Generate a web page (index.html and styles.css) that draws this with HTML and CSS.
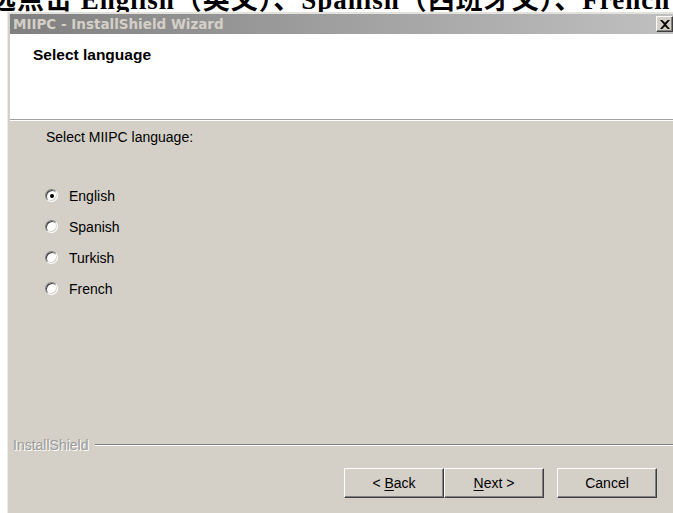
FILE: index.html
```html
<!DOCTYPE html>
<html lang="zh">
<head>
<meta charset="utf-8">
<title>MIIPC - InstallShield Wizard</title>
<link rel="stylesheet" href="styles.css">
</head>
<body>
<div class="caption"><span class="caption-text">选点击 English（英文）、Spanish（西班牙文）、French</span></div>
<div class="window">
  <div class="titlebar">
    <span class="title">MIIPC - InstallShield Wizard</span>
    <span class="close"><svg width="9" height="8" viewBox="0 0 9 8"><path d="M0 0h2l2.5 2.5L7 0h2L5.5 4 9 8H7L4.5 5.5 2 8H0l3.5-4z" fill="#000"/></svg></span>
  </div>
  <div class="header">
    <div class="header-title">Select language</div>
  </div>
  <div class="body">
    <div class="prompt">Select MIIPC language:</div>
    <div class="options">
      <label class="option"><span class="radio checked"></span>English</label>
      <label class="option"><span class="radio"></span>Spanish</label>
      <label class="option"><span class="radio"></span>Turkish</label>
      <label class="option"><span class="radio"></span>French</label>
    </div>
    <div class="brand-row">
      <span class="brand">InstallShield</span>
      <span class="etch"></span>
    </div>
    <div class="buttons">
      <div class="pair">
        <button class="btn" type="button">&lt; <u>B</u>ack</button>
        <button class="btn" type="button"><u>N</u>ext &gt;</button>
      </div>
      <button class="btn" type="button">Cancel</button>
    </div>
  </div>
</div>
</body>
</html>
```
FILE: styles.css
```css
html, body {
  margin: 0;
  padding: 0;
}
body {
  width: 673px;
  height: 513px;
  overflow: hidden;
  background: #fff;
  display: flex;
  flex-direction: column;
}

/* clipped line of document text above the dialog */
.caption {
  height: 12px;
  overflow: hidden;
  flex: none;
}
.caption-text {
  display: block;
  margin-top: -15px;
  margin-left: -11px;
  font-family: "Liberation Serif", "Noto Sans CJK SC", serif;
  font-weight: bold;
  font-size: 27px;
  line-height: 30px;
  letter-spacing: 1px;
  white-space: nowrap;
  color: #000;
}

.window {
  flex: 1;
  margin-left: 7px;
  width: 680px;
  display: flex;
  flex-direction: column;
  background: #d4d0c8;
  border-top: 2px solid #e4e2dc;
  border-left: 1px solid #ecebe7;
  padding-left: 2px;
  box-sizing: border-box;
}

.titlebar {
  height: 20px;
  flex: none;
  display: flex;
  align-items: center;
  justify-content: space-between;
  width: 664px;
  background: linear-gradient(to right, #808080, #c0c0c0);
  padding: 0 1px 0 3px;
  box-sizing: border-box;
}
.title {
  font-family: "DejaVu Sans", sans-serif;
  font-weight: bold;
  font-size: 13.5px;
  color: #d4d0c8;
}
.close {
  width: 17px;
  height: 16px;
  box-sizing: border-box;
  background: #d4d0c8;
  border-top: 1px solid #fff;
  border-left: 1px solid #fff;
  border-right: 1px solid #404040;
  border-bottom: 1px solid #404040;
  box-shadow: inset -1px -1px 0 #808080;
  display: flex;
  align-items: center;
  justify-content: center;
}
.close svg {
  width: 10px;
  height: 9px;
}

.header {
  height: 86px;
  flex: none;
  background: #fff;
  border-bottom: 1px solid #a0a0a0;
  box-shadow: 0 1px 0 #fff;
  padding: 12px 0 0 23px;
  box-sizing: border-box;
}
.header-title {
  font-family: "Liberation Sans", Arial, sans-serif;
  font-weight: bold;
  font-size: 15.5px;
  color: #000;
}

.body {
  flex: 1;
  display: flex;
  flex-direction: column;
  font-family: "Liberation Sans", Arial, sans-serif;
  font-size: 14px;
  color: #000;
  padding-top: 9px;
}
.prompt {
  margin-left: 36px;
  line-height: 16px;
}
.options {
  margin-top: 42px;
  margin-left: 35px;
  display: flex;
  flex-direction: column;
  gap: 14px;
}
.option {
  display: flex;
  align-items: center;
  gap: 11px;
  height: 17px;
}
.radio {
  width: 13px;
  height: 13px;
  border-radius: 50%;
  box-sizing: border-box;
  background: #fff;
  border: 1px solid;
  border-color: #808080 #fff #fff #808080;
  box-shadow: inset 1px 1px 0 #404040, inset -1px -1px 0 #d4d0c8;
  position: relative;
  flex: none;
}
.radio.checked::after {
  content: "";
  position: absolute;
  left: 3.5px;
  top: 3.5px;
  width: 4px;
  height: 4px;
  border-radius: 50%;
  background: #000;
}

.brand-row {
  margin-top: auto;
  display: flex;
  align-items: center;
  gap: 6px;
  margin-left: 3px;
}
.brand {
  color: #9a9a9a;
  text-shadow: 1px 1px 0 #fff;
  font-size: 14px;
  line-height: 16px;
}
.etch {
  flex: 1;
  height: 1px;
  background: #808080;
  border-bottom: 1px solid #fff;
}

.buttons {
  display: flex;
  gap: 13px;
  margin: 15px 0 15px 334px;
}
.pair {
  display: flex;
}
.btn {
  width: 100px;
  height: 30px;
  padding: 0;
  margin: 0;
  font-family: "Liberation Sans", Arial, sans-serif;
  font-size: 14px;
  color: #000;
  background: #d4d0c8;
  border: 1px solid;
  border-color: #fff #404040 #404040 #fff;
  box-shadow: inset -1px -1px 0 #808080;
  border-radius: 0;
}
.btn u {
  text-decoration: underline;
  text-underline-offset: 2px;
}
```
